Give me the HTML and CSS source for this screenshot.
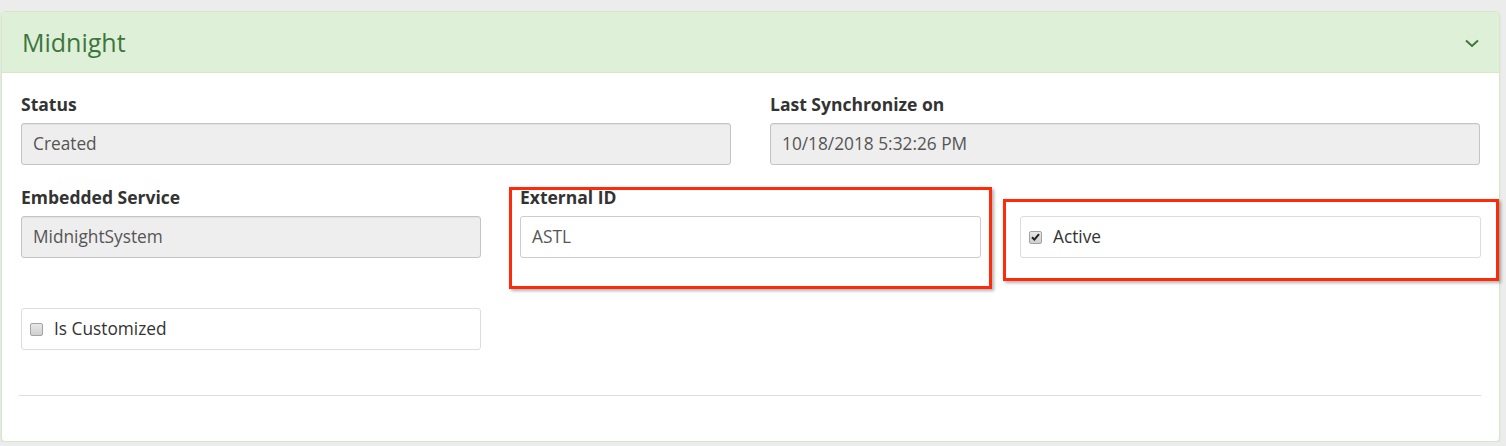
FILE: index.html
```html
<!DOCTYPE html>
<html lang="en">
<head>
    <meta charset="UTF-8">
    <title>Midnight</title>
    <link rel="stylesheet" href="styles.css">
</head>
<body>
    <div class="panel">
        <div class="panel-heading">
            <h2>Midnight</h2>
            <svg class="chevron" width="14" height="9" viewBox="0 0 14 9">
                <polyline points="1,1.5 7,7 13,1.5" fill="none" stroke="#3c763d" stroke-width="2"/>
            </svg>
        </div>

        <div class="panel-body">
            <div class="row two">
                <div class="form-group">
                    <label>Status</label>
                    <div class="field readonly">Created</div>
                </div>
                <div class="form-group">
                    <label>Last Synchronize on</label>
                    <div class="field readonly">10/18/2018 5:32:26 PM</div>
                </div>
            </div>

            <div class="row three">
                <div class="form-group">
                    <label>Embedded Service</label>
                    <div class="field readonly">MidnightSystem</div>
                </div>
                <div class="form-group marked">
                    <label>External ID</label>
                    <div class="field">ASTL</div>
                    <div class="highlight"></div>
                </div>
                <div class="form-group marked">
                    <label>&nbsp;</label>
                    <div class="field check">
                        <span class="box checked">
                            <svg width="9" height="8" viewBox="0 0 9 8"><path d="M1 4.2 L3.4 6.6 L8 1.2" fill="none" stroke="#222" stroke-width="2"/></svg>
                        </span>
                        Active
                    </div>
                    <div class="highlight small"></div>
                </div>
            </div>

            <div class="row three last">
                <div class="form-group">
                    <label>&nbsp;</label>
                    <div class="field check">
                        <span class="box"></span>
                        Is Customized
                    </div>
                </div>
            </div>

            <hr>
        </div>
    </div>
</body>
</html>
```

FILE: styles.css
```css
body {
    margin: 0;
    padding: 11px 6px 0 1px;
    background-color: #ececec;
    font-family: "Open Sans", "Noto Sans", sans-serif;
    color: #333;
}
.panel {
    background-color: #fff;
    border: 1px solid #d6e9c6;
    border-radius: 4px;
    box-shadow: 0 1px 2px rgba(0, 0, 0, 0.08);
}
.panel-heading {
    height: 60px;
    background-color: #dff0d8;
    border-bottom: 1px solid #d6e9c6;
    border-radius: 3px 3px 0 0;
    display: flex;
    align-items: center;
    justify-content: space-between;
    padding: 0 20px 0 20px;
}
.panel-heading h2 {
    margin: 0;
    font-size: 25px;
    font-weight: normal;
    color: #3c763d;
}
.chevron {
    margin-top: 2px;
}
.panel-body {
    padding: 20px 18px 45px 19px;
}
.row {
    display: grid;
    column-gap: 39px;
    margin-bottom: 21px;
}
.row.two {
    grid-template-columns: 710px 710px;
}
.row.three {
    grid-template-columns: 460px 461px 461px;
    margin-bottom: 20px;
}
.row.last {
    margin-bottom: 0;
}
.form-group {
    position: relative;
}
.form-group label {
    display: block;
    font-size: 17.5px;
    font-weight: bold;
    line-height: 22px;
    margin-bottom: 8px;
}
.field {
    height: 40px;
    border: 1px solid #ccc;
    border-radius: 3px;
    padding: 0 11px;
    font-size: 17.3px;
    line-height: 40px;
    color: #555;
    background-color: #fff;
}
.field.readonly {
    background-color: #eee;
    border-color: #c4c4c4;
    box-shadow: inset 0 1px 1px rgba(0, 0, 0, 0.05);
}
.field.check {
    display: flex;
    align-items: center;
    gap: 11px;
    padding-left: 8px;
    border-color: #ddd;
    color: #333;
}
.box {
    width: 11px;
    height: 11px;
    border: 1px solid #a3a3a3;
    border-radius: 2px;
    background: linear-gradient(#e8e8e8, #cfcfcf);
    display: flex;
    align-items: center;
    justify-content: center;
}
.highlight {
    position: absolute;
    top: 1px;
    left: -11px;
    right: -11px;
    bottom: -31px;
    border: 3px solid #ff2a0a;
    box-shadow: 2px 2px 3px rgba(0, 0, 0, 0.3);
    pointer-events: none;
}
.highlight.small {
    top: 13px;
    left: -17px;
    right: -18px;
    bottom: -23px;
}
hr {
    margin: 45px 0 0 -2px;
    border: 0;
    border-top: 1px solid #ddd;
}
```
